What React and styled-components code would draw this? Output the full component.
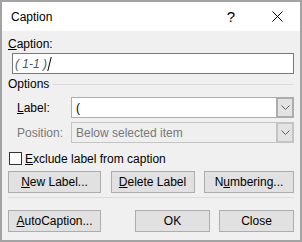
import React from 'react'
import styled, { createGlobalStyle } from 'styled-components'

const Global = createGlobalStyle`
    html, body {
        margin: 0;
        padding: 0;
        background: #ffffff;
    }
    * {
        box-sizing: border-box;
    }
`

const Window = styled.div`
    width: 302px;
    height: 242px;
    border: 2px solid #a3a3a3;
    background: #f0f0f0;
    font-family: "Segoe UI", "Liberation Sans", Arial, sans-serif;
    font-size: 12px;
    color: #000;
    display: flex;
    flex-direction: column;
`

const TitleBar = styled.div`
    height: 29px;
    background: #fff;
    display: flex;
    align-items: center;
    padding-left: 9px;
`

const Title = styled.span`
    flex: 1;
    font-size: 12px;
    line-height: 14px;
`

const TitleButton = styled.div`
    width: 46px;
    height: 29px;
    display: flex;
    align-items: center;
    justify-content: center;
    font-size: 15px;
`

const Body = styled.div`
    flex: 1;
    display: flex;
    flex-direction: column;
    padding: 0 6px;
`

const FieldLabel = styled.div`
    margin-top: 6px;
    line-height: 14px;
`

const TextBox = styled.div`
    margin: 2px 0 0 4px;
    height: 21px;
    background: #fff;
    border: 1px solid #7a7a7a;
    display: flex;
    align-items: center;
    padding-left: 2px;
    font-style: italic;
    color: #4e5966;
`

const Caret = styled.span`
    display: inline-block;
    width: 1px;
    height: 14px;
    background: #000;
    margin-left: 2px;
    transform: skewX(-14deg);
`

const Legend = styled.div`
    margin-top: 3px;
    height: 14px;
    line-height: 14px;
    display: flex;
    align-items: center;
    gap: 4px;
    &::after {
        content: '';
        flex: 1;
        height: 1px;
        background: #dcdcdc;
    }
`

const Row = styled.div`
    margin-top: ${(p) => p.top}px;
    display: flex;
    align-items: center;
    height: 21px;
`

const RowLabel = styled.span`
    width: 63px;
    padding-left: 9px;
    color: ${(p) => (p.disabled ? '#787878' : '#000')};
`

const Combo = styled.div`
    flex: 1;
    height: 21px;
    display: flex;
    align-items: center;
    border: 1px solid ${(p) => (p.disabled ? '#c4c4c4' : '#adadad')};
    background: ${(p) => (p.disabled ? '#efefef' : '#fff')};
    color: ${(p) => (p.disabled ? '#787878' : '#000')};
`

const ComboText = styled.span`
    flex: 1;
    padding-left: 4px;
`

const ComboArrow = styled.div`
    width: 18px;
    height: 21px;
    margin: -1px -1px -1px 0;
    border: 2px solid ${(p) => (p.disabled ? '#c4c4c4' : '#adadad')};
    background: #e3e3e3;
    display: flex;
    align-items: center;
    justify-content: center;
`

const CheckRow = styled.label`
    margin-top: 8px;
    height: 15px;
    display: flex;
    align-items: center;
    gap: 3px;
    padding-left: 1px;
`

const Box = styled.span`
    width: 13px;
    height: 13px;
    border: 1px solid #333;
    background: #fff;
`

const ButtonRow = styled.div`
    margin-top: ${(p) => p.top}px;
    display: flex;
    justify-content: space-between;
    gap: 9px;
`

const Button = styled.div`
    width: ${(p) => p.w}px;
    height: 22px;
    background: #e1e1e1;
    border: 1px solid #adadad;
    display: flex;
    align-items: center;
    justify-content: center;
    margin-left: ${(p) => (p.push ? 'auto' : '0')};
`

const Separator = styled.div`
    margin-top: 4px;
    height: 1px;
    background: #dcdcdc;
`

const Chevron = () => (
    <svg width="9" height="5" viewBox="0 0 9 5">
        <path d="M0.5 0.5 L4.5 4.5 L8.5 0.5" fill="none" stroke="#606060" strokeWidth="1" />
    </svg>
)

const CloseIcon = () => (
    <svg width="11" height="11" viewBox="0 0 11 11">
        <path d="M0.5 0.5 L10.5 10.5 M10.5 0.5 L0.5 10.5" stroke="#000" strokeWidth="1" />
    </svg>
)

export default class App extends React.Component {
    render() {
        return (
            <>
                <Global />
                <Window>
                    <TitleBar>
                        <Title>Caption</Title>
                        <TitleButton>?</TitleButton>
                        <TitleButton><CloseIcon /></TitleButton>
                    </TitleBar>
                    <Body>
                        <FieldLabel><u>C</u>aption:</FieldLabel>
                        <TextBox>( 1-1 )<Caret /></TextBox>
                        <Legend>Options</Legend>
                        <Row top={6}>
                            <RowLabel><u>L</u>abel:</RowLabel>
                            <Combo>
                                <ComboText>(</ComboText>
                                <ComboArrow><Chevron /></ComboArrow>
                            </Combo>
                        </Row>
                        <Row top={4}>
                            <RowLabel disabled>Position:</RowLabel>
                            <Combo disabled>
                                <ComboText>Below selected item</ComboText>
                                <ComboArrow disabled><Chevron /></ComboArrow>
                            </Combo>
                        </Row>
                        <CheckRow>
                            <Box />
                            <span><u>E</u>xclude label from caption</span>
                        </CheckRow>
                        <ButtonRow top={5}>
                            <Button w={93}><u>N</u>ew Label...</Button>
                            <Button w={84}><u>D</u>elete Label</Button>
                            <Button w={90}>N<u>u</u>mbering...</Button>
                        </ButtonRow>
                        <Separator />
                        <ButtonRow top={12}>
                            <Button w={93}><u>A</u>utoCaption...</Button>
                            <Button w={75} push>OK</Button>
                            <Button w={75}>Close</Button>
                        </ButtonRow>
                    </Body>
                </Window>
            </>
        )
    }
}
